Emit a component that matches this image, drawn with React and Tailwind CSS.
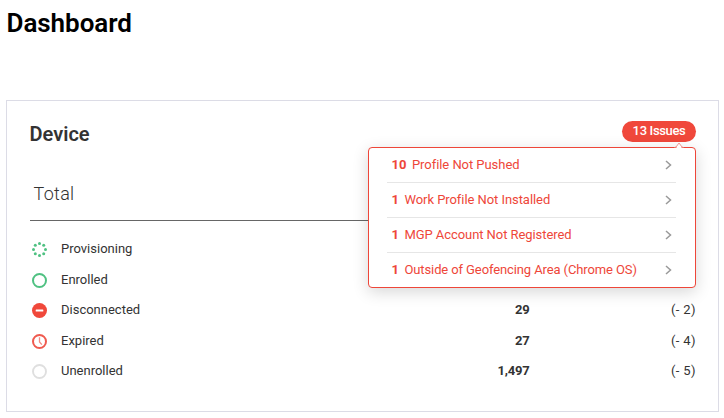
const issues = [
  { count: '10', label: 'Profile Not Pushed', spacing: 'tracking-[-0.05px]' },
  { count: '1', label: 'Work Profile Not Installed', spacing: 'tracking-[-0.06px]' },
  { count: '1', label: 'MGP Account Not Registered', spacing: 'tracking-[-0.07px]' },
  { count: '1', label: 'Outside of Geofencing Area (Chrome OS)', spacing: 'tracking-[-0.11px]' },
];

const rows = [
  { icon: 'provisioning', label: 'Provisioning', count: '', delta: '' },
  { icon: 'enrolled', label: 'Enrolled', count: '', delta: '' },
  { icon: 'disconnected', label: 'Disconnected', count: '29', delta: '(- 2)' },
  { icon: 'expired', label: 'Expired', count: '27', delta: '(- 4)' },
  { icon: 'unenrolled', label: 'Unenrolled', count: '1,497', delta: '(- 5)' },
];

const dots = [
  [8, 2], [12.2, 3.8], [14, 8], [12.2, 12.2],
  [8, 14], [3.8, 12.2], [2, 8], [3.8, 3.8],
];

function StatusIcon({ kind }) {
  return (
    <svg className="size-[15px] shrink-0" viewBox="0.5 0.5 15 15" fill="none">
      {kind === 'provisioning' &&
        dots.map(([x, y]) => <circle key={`${x}-${y}`} cx={x} cy={y} r="1.5" fill="#4fc182" />)}
      {kind === 'enrolled' && <circle cx="8" cy="8" r="6.5" stroke="#4fc182" strokeWidth="2" />}
      {kind === 'disconnected' && (
        <>
          <circle cx="8" cy="8" r="7.5" fill="#f0483b" />
          <rect x="4.2" y="6.9" width="7.6" height="2.2" rx=".5" fill="#fff" />
        </>
      )}
      {kind === 'expired' && (
        <>
          <circle cx="8" cy="8" r="6.5" stroke="#ef5a4f" strokeWidth="2" />
          <path d="M8 3.8V8.4L10.4 11.2" stroke="#f28b83" strokeWidth="1.3" />
        </>
      )}
      {kind === 'unenrolled' && <circle cx="8" cy="8" r="6.5" stroke="#dfdfdf" strokeWidth="1.9" />}
    </svg>
  );
}

function IssuesMenu() {
  return (
    <div className="absolute top-[26px] right-0 w-[328px] rounded border border-[#ee4639] bg-white pr-[19px] pl-[18px] shadow-[0_4px_16px_rgba(0,0,0,0.16)]">
      <svg className="absolute -top-[6px] right-[10px] h-[7px] w-3" viewBox="0 0 12 7">
        <path d="M2.5 7L6 1.2L9.5 7Z" fill="#fff" />
        <path d="M1.5 5.5L3 5L6 1L9 5L10.5 5.5" fill="none" stroke="#f3968f" strokeWidth="1" />
      </svg>
      {issues.map((issue) => (
        <div
          key={issue.label}
          className="flex h-[35px] items-center border-b border-[#e6e6e6] pl-[4.5px] text-[13px] text-[#ee4639] last:h-[34px] last:border-b-0"
        >
          <span className="mr-[5.5px] font-bold">{issue.count}</span>
          <span className={`whitespace-nowrap ${issue.spacing}`}>{issue.label}</span>
          <svg className="mr-[4px] ml-auto h-[10px] w-[7px]" viewBox="0 0 7 10" fill="none">
            <path d="M1 1L5.5 5L1 9" stroke="#999" strokeWidth="1.5" />
          </svg>
        </div>
      ))}
    </div>
  );
}

export default function App() {
  return (
    <main className="h-[418px] w-[724px] overflow-hidden bg-white pl-[6px] font-[Roboto,'Liberation_Sans',sans-serif] text-[#333]">
      <h1 className="h-[100px] pt-[7px] pl-[0.5px] text-[26px] leading-8 font-semibold tracking-[-0.05px] text-black">
        Dashboard
      </h1>
      <section className="h-[312px] w-[713px] border border-[#dcdce6] pr-[22px] pl-[23px]">
        <header className="flex items-start justify-between pt-5">
          <h2 className="-ml-[0.5px] text-[20px] leading-[26px] font-semibold">Device</h2>
          <div className="relative z-10">
            <div className="flex h-[21px] w-[74px] items-center justify-center rounded-full bg-[#f0483b] pb-px text-[13px] font-medium tracking-[-0.35px] text-white">
              13 Issues
            </div>
            <IssuesMenu />
          </div>
        </header>
        <div className="mt-[33px] h-[41px] border-b border-[#666] pl-[3.5px] text-[18px] leading-7 font-light tracking-[0.3px]">
          Total
        </div>
        <div className="mt-[12.5px] grid auto-rows-[30.5px] text-[13px]">
          {rows.map((row) => (
            <div key={row.label} className="flex items-center">
              <div className="ml-[2px] flex pt-[2px]">
                <StatusIcon kind={row.icon} />
              </div>
              <span className="ml-[14px] w-[200px]">{row.label}</span>
              <span className="ml-auto font-bold tracking-[-0.2px]">{row.count}</span>
              <span className="w-[166.5px] text-right tracking-[0.4px]">{row.delta}</span>
            </div>
          ))}
        </div>
      </section>
    </main>
  );
}
